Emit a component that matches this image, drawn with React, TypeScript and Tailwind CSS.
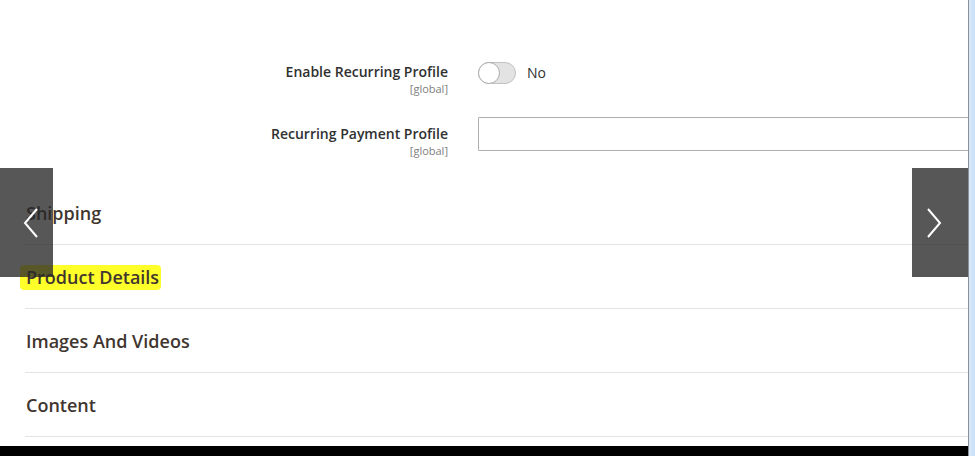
import React from "react";

const SECTIONS = ["Shipping", "Product Details", "Images And Videos", "Content"];

function Chevron({ dir }: { dir: "left" | "right" }) {
  return (
    <svg width="18" height="32" viewBox="0 0 18 32" fill="none">
      <polyline
        points={dir === "left" ? "15,2 3,16 15,30" : "3,2 15,16 3,30"}
        stroke="#ffffff"
        strokeWidth="2"
        strokeLinejoin="miter"
      />
    </svg>
  );
}

export default function App() {
  return (
    <div
      className="relative w-[975px] h-[456px] flex overflow-hidden bg-white text-[#303030]"
      style={{ fontFamily: '"Open Sans", "Liberation Sans", sans-serif' }}
    >
      {/* page column */}
      <div className="relative w-[968px] h-full flex flex-col overflow-hidden">
        <div className="flex-1 flex flex-col">
          {/* recurring profile fields */}
          <div className="pt-[62px] flex flex-col gap-[21px]">
            <div className="flex items-start">
              <div className="w-[448px] flex flex-col items-end">
                <span className="text-[14px] leading-[20px] font-semibold">Enable Recurring Profile</span>
                <span className="text-[11px] leading-[14px] text-[#808080]">[global]</span>
              </div>
              <div className="pl-[30px] flex items-center gap-[11px]">
                <span className="relative w-[38px] h-[22px] rounded-full bg-[#e3e3e3] border border-[#c2c2c2]">
                  <span className="absolute -left-px -top-px w-[22px] h-[22px] rounded-full bg-white border border-[#adadad]" />
                </span>
                <span className="text-[14px] leading-[20px]">No</span>
              </div>
            </div>
            <div className="flex items-start">
              <div className="w-[448px] pt-[7px] flex flex-col items-end">
                <span className="text-[14px] leading-[20px] font-semibold">Recurring Payment Profile</span>
                <span className="text-[11px] leading-[14px] text-[#808080]">[global]</span>
              </div>
              <div className="pl-[30px] flex-1 -mr-[4px]">
                <input className="w-full h-[34px] border border-[#adadad] rounded-[1px] bg-white outline-none" />
              </div>
            </div>
          </div>

          {/* collapsible sections */}
          <div className="mt-[23px] ml-[25px] flex flex-col">
            {SECTIONS.map((title) => (
              <div key={title} className="h-[64px] flex items-center border-b border-[#e3e3e3]">
                {title === "Product Details" ? (
                  <span className="-ml-[5px] pl-[6px] pr-[2px] pb-[1px] bg-[#ffff2a] rounded-[4px] text-[18px] leading-[24px] font-semibold text-[#41362f] translate-y-[1px]">
                    {title}
                  </span>
                ) : (
                  <span className="pl-px text-[18px] leading-[24px] font-semibold text-[#41362f]">{title}</span>
                )}
              </div>
            ))}
          </div>
        </div>
        <div className="h-[10px] bg-black" />

        {/* slide arrows */}
        <button className="absolute left-0 top-[168px] w-[53px] h-[109px] flex items-center pl-[22px] bg-[rgba(40,40,40,0.78)]">
          <Chevron dir="left" />
        </button>
        <button className="absolute right-0 top-[168px] w-[56px] h-[109px] flex items-center pl-[13px] bg-[rgba(40,40,40,0.78)]">
          <Chevron dir="right" />
        </button>
      </div>

      {/* window scrollbar */}
      <div className="w-[7px] h-full border-l border-[#8c9096] bg-[linear-gradient(90deg,#dbe9f8,#c6def5)]" />
    </div>
  );
}
